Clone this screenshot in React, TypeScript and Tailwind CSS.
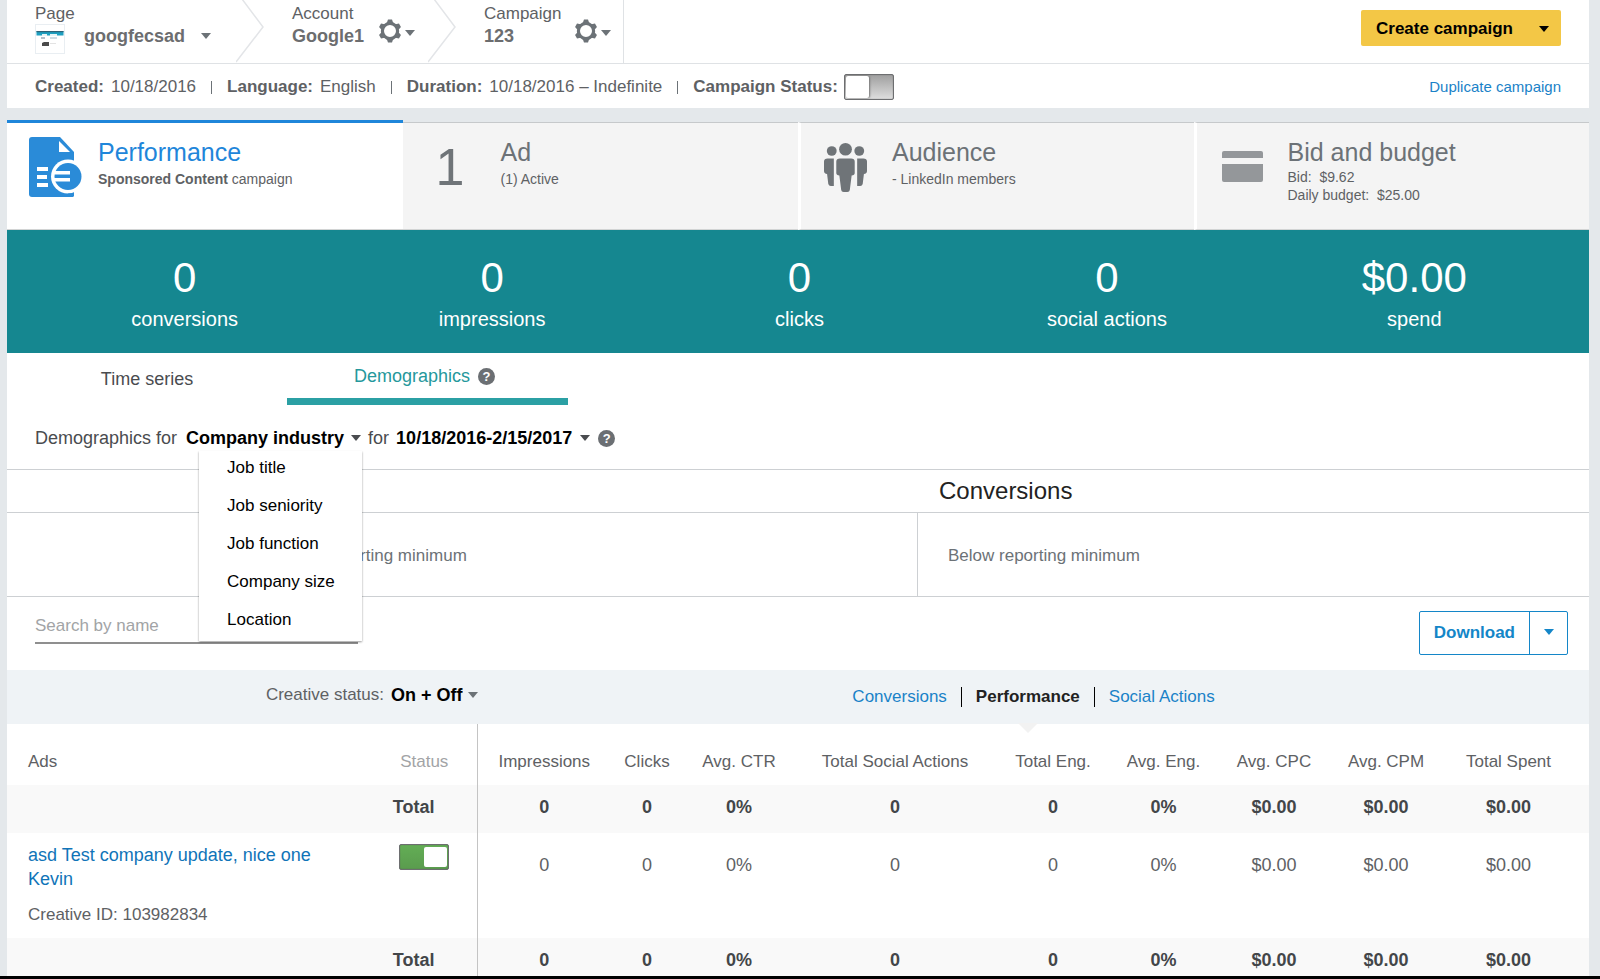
import { useState } from 'react';
import type { ReactNode } from 'react';

interface Metric {
  value: string;
  label: string;
}

interface ReportRow {
  id: string;
  kind: 'total' | 'ad';
  height: string;
  values: string[];
}

const metrics: Metric[] = [
  { value: '0', label: 'conversions' },
  { value: '0', label: 'impressions' },
  { value: '0', label: 'clicks' },
  { value: '0', label: 'social actions' },
  { value: '$0.00', label: 'spend' },
];

const demographics = ['Job title', 'Job seniority', 'Job function', 'Company size', 'Location'];

const columns = [
  { name: 'Impressions', width: 'w-[134px]' },
  { name: 'Clicks', width: 'w-[72px]' },
  { name: 'Avg. CTR', width: 'w-[112px]' },
  { name: 'Total Social Actions', width: 'w-[200px]' },
  { name: 'Total Eng.', width: 'w-[116px]' },
  { name: 'Avg. Eng.', width: 'w-[105px]' },
  { name: 'Avg. CPC', width: 'w-[116px]' },
  { name: 'Avg. CPM', width: 'w-[108px]' },
  { name: 'Total Spent', width: 'w-[137px]' },
];

const values = ['0', '0', '0%', '0', '0', '0%', '$0.00', '$0.00', '$0.00'];

const rows: ReportRow[] = [
  { id: 'total-top', kind: 'total', height: 'h-[48px]', values },
  { id: '103982834', kind: 'ad', height: 'h-[105px]', values },
  { id: 'total-bottom', kind: 'total', height: 'h-[38px]', values },
];

const Caret = ({ className = '' }: { className?: string }) => (
  <svg viewBox="0 0 10 6" className={`h-[6px] w-[10px] shrink-0 fill-current ${className}`} aria-hidden="true">
    <path d="M0 0h10L5 6z" />
  </svg>
);

const Gear = () => (
  <svg viewBox="0 0 24 24" className="size-[24px]" aria-hidden="true">
    <circle cx="12" cy="12" r="7.600" fill="none" stroke="#6c7277" strokeWidth="3.200" />
    {[0, 60, 120, 180, 240, 300].map((angle) => (
      <path key={angle} d="M10 .5h4l1.600 4.500H8.400z" fill="#6c7277" transform={`rotate(${angle} 12 12)`} />
    ))}
  </svg>
);

const Chevron = () => (
  <svg viewBox="0 0 28 63" className="h-[63px] w-[28px]" fill="none" stroke="#e3e5e8" strokeWidth="1.500" aria-hidden="true">
    <path d="M6 -1L27 27L0 62" />
  </svg>
);

const PageThumb = () => (
  <svg viewBox="0 0 30 30" className="size-[30px]" aria-hidden="true">
    <rect x=".5" y=".5" width="29" height="29" fill="#fff" stroke="#e9eef2" />
    <rect x="1.500" y="7" width="27" height="4.500" fill="#1d9fc0" />
    <rect x="1.500" y="7" width="27" height="1.200" fill="#2f6277" />
    <rect x="7" y="10" width="5" height="2" fill="#e8f4f6" />
    <rect x="15" y="10" width="7" height="2" fill="#e8f4f6" />
    <rect x="6" y="13" width="4" height="2" fill="#b4c0cb" />
    <rect x="15" y="13" width="7" height="2" fill="#cfdce4" />
    <path d="M7 19l2-1h5v4H7z" fill="#4b4b4b" />
    <rect x="15" y="19" width="6" height="1" fill="#e3e3e3" />
  </svg>
);

const ReportIcon = () => (
  <svg viewBox="0 0 53 60" className="h-[60px] w-[53px]" aria-hidden="true">
    <path d="M3 0h28l14 15v43a2 2 0 0 1-2 2H3a3 3 0 0 1-3-3V3a3 3 0 0 1 3-3z" fill="#2a8bd8" />
    <path d="M30 4v11h11z" fill="#fff" />
    <path d="M8 30h11v4H8zM8 38h10v4H8zM8 46h11v4H8z" fill="#fff" />
    <circle cx="39" cy="39.500" r="17" fill="#fff" />
    <path d="M39 56.500q3 0 6-1v3a2 2 0 0 1-2 1.500h-6z" fill="#2a8bd8" />
    <circle cx="39" cy="39.500" r="13.500" fill="#2a8bd8" />
    <path d="M24 34h17v3.500H24zM24 41h17v3.500H24z" fill="#fff" />
  </svg>
);

const PeopleIcon = () => (
  <svg viewBox="0 0 35 49" preserveAspectRatio="none" className="h-[49px] w-[43px] fill-[#6f7478]" aria-hidden="true">
    <ellipse cx="17.500" cy="6.300" rx="5.200" ry="6.300" />
    <ellipse cx="6.300" cy="8" rx="4" ry="4.800" />
    <ellipse cx="28.700" cy="8" rx="4" ry="4.800" />
    <path d="M13 15.500h9q3 0 3 3V30q0 2-2.500 2.500L21 47q-.2 2-2 2h-3q-1.800 0-2-2l-1.500-14.500Q10 32 10 30V18.500q0-3 3-3z" />
    <path d="M3 15.500h5V43H5.500q-1.500 0-2-2L2.500 31Q0 30.500 0 28v-9.500q0-3 3-3z" />
    <path d="M32 15.500h-5V43h2.500q1.500 0 2-2l1-10q2.500-.5 2.500-3v-9.500q0-3-3-3z" />
  </svg>
);

const CardIcon = () => (
  <svg viewBox="0 0 41 31" className="h-[31px] w-[41px] fill-[#94979a]" aria-hidden="true">
    <path d="M2 0h37q2 0 2 2v5H0V2q0-2 2-2zM0 13h41v16q0 2-2 2H2q-2 0-2-2z" />
  </svg>
);

const Help = () => (
  <button
    type="button"
    aria-label="Help"
    className="flex size-[17px] items-center justify-center rounded-full bg-[#6b6f73] text-[13px] leading-none font-bold text-white"
  >
    ?
  </button>
);

const Toggle = ({ label, defaultChecked = false }: { label: string; defaultChecked?: boolean }) => (
  <input
    type="checkbox"
    aria-label={label}
    defaultChecked={defaultChecked}
    className="flex h-[26px] w-[50px] appearance-none items-center justify-start rounded-xs border border-[#6d6e70] bg-linear-to-b from-[#a0a0a0] to-[#dedede] px-px shadow-[inset_0_0_1px_#555] before:block before:h-[22px] before:w-[23px] before:rounded-xs before:bg-white before:shadow-[1px_0_2px_#777] checked:justify-end checked:from-[#63ad55] checked:to-[#5a9c4e] checked:before:h-[20px] checked:before:shadow-none"
  />
);

const Separator = () => <span className="h-[13px] w-px bg-[#6c7277]" />;

const Summary = ({
  icon,
  title,
  iconClass,
  className,
  titleClass = 'text-[#6c7277]',
  children,
}: {
  icon: ReactNode;
  title: string;
  iconClass: string;
  className: string;
  titleClass?: string;
  children: ReactNode;
}) => (
  <button type="button" className={`flex border-b border-b-[#d2d4d4] text-left ${className}`}>
    <span className={`shrink-0 ${iconClass}`}>{icon}</span>
    <span className="flex flex-col pt-[13px] text-[14px] leading-[18px] text-[#5e6164]">
      <span className={`text-[25px] leading-[32px] ${titleClass}`}>{title}</span>
      {children}
    </span>
  </button>
);

export default function App() {
  const [menuOpen, setMenuOpen] = useState(true);
  const [search, setSearch] = useState('');

  return (
    <div className="min-h-screen border-b-3 border-black bg-[#e4e8eb] pr-[11px] pl-[7px] font-['Liberation_Sans',Arial,sans-serif] text-[17px] text-[#5e6164]">
      <header className="bg-white">
        <div className="flex h-[64px] items-start border-b border-[#dfe2e5]">
          <div className="flex w-[229px] flex-col pt-[4px] pl-[28px]">
            <label htmlFor="page" className="leading-[20px]">Page</label>
            <div className="flex items-center">
              <PageThumb />
              <div className="flex items-center pb-[7px] pl-[19px]">
                <select id="page" className="appearance-none text-[18px] leading-[22px] font-bold text-[#6c6d6f]">
                  <option>googfecsad</option>
                </select>
                <Caret className="ml-[15px] text-[#6c7277]" />
              </div>
            </div>
          </div>
          <Chevron />
          <div className="flex w-[164px] pt-[4px] pl-[28px]">
            <div className="w-[86px]">
              <div className="leading-[20px]">Account</div>
              <div className="pt-[1px] text-[18px] leading-[22px] font-bold text-[#6c6d6f]">Google1</div>
            </div>
            <button type="button" aria-label="Account settings" className="flex h-[42px] items-center gap-[3px] pt-[11px] text-[#6c7277]">
              <Gear />
              <Caret className="mt-[4px]" />
            </button>
          </div>
          <Chevron />
          <div className="flex h-[63px] w-[168px] border-r border-[#dfe2e5] pt-[4px] pl-[28px]">
            <div className="w-[90px]">
              <div className="leading-[20px]">Campaign</div>
              <div className="pt-[1px] text-[18px] leading-[22px] font-bold text-[#6c6d6f]">123</div>
            </div>
            <button type="button" aria-label="Campaign settings" className="flex h-[42px] items-center gap-[3px] pt-[11px] text-[#6c7277]">
              <Gear />
              <Caret className="mt-[4px]" />
            </button>
          </div>
          <button
            type="button"
            className="mt-[10px] mr-[28px] ml-auto flex h-[36px] items-center rounded-xs bg-[#f3c746] px-[12px] pt-[2px] font-bold text-black"
          >
            <span className="pl-[3px]">Create campaign</span>
            <Caret className="ml-[26px]" />
          </button>
        </div>

        <div className="flex h-[44px] items-center gap-[15px] px-[28px] pt-[2px]">
          <span className="flex gap-[7px]"><b>Created:</b> 10/18/2016</span>
          <Separator />
          <span className="flex gap-[7px]"><b>Language:</b> English</span>
          <Separator />
          <span className="flex gap-[7px]"><b>Duration:</b> 10/18/2016 – Indefinite</span>
          <Separator />
          <span className="flex items-center gap-[6px]">
            <b>Campaign Status:</b>
            <Toggle label="Campaign Status" />
          </span>
          <a href="#duplicate" className="ml-auto text-[15px] text-[#1a82c8]">Duplicate campaign</a>
        </div>
      </header>

      <nav className="mt-[12px] grid grid-cols-4">
        <Summary
          title="Performance"
          titleClass="text-[#1f86da]"
          className="h-[110px] border-t-3 border-t-[#1f86da] bg-white"
          icon={<ReportIcon />}
          iconClass="w-[91px] pt-[14px] pl-[22px]"
        >
          <span className="pt-[2px]"><b>Sponsored Content</b> campaign</span>
        </Summary>
        <Summary
          title="Ad"
          className="mt-[2px] h-[108px] border-t border-t-[#c6c9cb] bg-[#f4f4f4]"
          icon={<span className="text-[52px] leading-[52px] text-[#6f7478]">1</span>}
          iconClass="w-[98px] pt-[18px] pl-[33px]"
        >
          <span className="pt-[2px]">(1) Active</span>
        </Summary>
        <Summary
          title="Audience"
          className="mt-[2px] h-[108px] border-t border-l-3 border-t-[#c6c9cb] border-l-white bg-[#f4f4f4]"
          icon={<PeopleIcon />}
          iconClass="w-[91px] pt-[20px] pl-[23px]"
        >
          <span className="pt-[2px]">- LinkedIn members</span>
        </Summary>
        <Summary
          title="Bid and budget"
          className="mt-[2px] h-[108px] border-t border-l-3 border-t-[#c6c9cb] border-l-white bg-[#f4f4f4]"
          icon={<CardIcon />}
          iconClass="w-[91px] pt-[28px] pl-[25px]"
        >
          <span>Bid:&nbsp; $9.62</span>
          <span>Daily budget:&nbsp; $25.00</span>
        </Summary>
      </nav>

      <section className="flex h-[123px] bg-[#158790] pt-[24px] pr-[21px] pl-[24px] text-center text-white">
        {metrics.map((metric) => (
          <div key={metric.label} className="flex-1">
            <div className="text-[42px] leading-[48px]">{metric.value}</div>
            <div className="pt-[3px] text-[20px] leading-[28px]">{metric.label}</div>
          </div>
        ))}
      </section>

      <main className="bg-white">
        <div className="flex h-[52px] text-[18px]">
          <button type="button" className="w-[280px] text-[#4a4c4f]">Time series</button>
          <div className="flex w-[281px] items-center justify-center gap-[8px] border-b-7 border-[#2ba0a4] pt-[2px] pr-[6px] text-[#25989c]">
            <button type="button">Demographics</button>
            <Help />
          </div>
        </div>

        <div className="flex h-[64px] items-center px-[28px] pt-[2px] text-[18px] text-[#4a4c4f]">
          <span>Demographics for</span>
          <div className="relative ml-[9px]">
            <button
              type="button"
              aria-expanded={menuOpen}
              onClick={() => setMenuOpen(!menuOpen)}
              className="flex items-center gap-[7px] font-bold text-black"
            >
              Company industry
              <Caret className="text-[#4a4c4f]" />
            </button>
            {menuOpen && (
              <ul className="absolute top-full left-[13px] z-10 -mt-px w-[163px] bg-white text-[17px] text-black shadow-[0_1px_2px_rgba(0,0,0,0.4)] [clip-path:inset(0_-4px_-4px_-4px)]">
                {demographics.map((item) => (
                  <li key={item}>
                    <button type="button" className="h-[38px] w-full pb-[3px] pl-[28px] text-left">{item}</button>
                  </li>
                ))}
              </ul>
            )}
          </div>
          <label htmlFor="range" className="mx-[7px]">for</label>
          <select id="range" className="appearance-none font-bold text-black">
            <option>10/18/2016-2/15/2017</option>
          </select>
          <Caret className="mr-[8px] ml-[7px]" />
          <Help />
        </div>

        <div className="border-y border-[#cdd0d3]">
          <div className="grid h-[43px] grid-cols-[238px_1fr_1fr] items-center border-b border-[#cdd0d3] text-[24px] text-[#222]">
            <h2 className="col-start-3 pl-[22px]">Conversions</h2>
          </div>
          <div className="grid h-[83px] grid-cols-[238px_1fr_1fr] text-[#6c7277]">
            <div className="col-start-2 flex items-center pt-[2px] pl-[30px]">Below reporting minimum</div>
            <div className="flex items-center border-l border-[#cdd0d3] pt-[2px] pl-[30px]">Below reporting minimum</div>
          </div>
        </div>

        <div className="flex h-[73px] items-start justify-between pt-[14px] pr-[21px] pl-[28px]">
          <input
            type="text"
            aria-label="Search by name"
            placeholder="Search by name"
            value={search}
            onChange={(e) => setSearch(e.target.value)}
            className="h-[33px] w-[323px] border-b-2 border-[#8f8f8f] pb-[2px] outline-none placeholder:text-[#a2a4a6]"
          />
          <div className="flex h-[44px] rounded-xs border border-[#1486c8] font-bold text-[#1486c8]">
            <button type="button" className="px-[14px]">Download</button>
            <button type="button" aria-label="Download options" className="flex w-[38px] items-center justify-center border-l border-[#1486c8] pb-[3px]">
              <Caret />
            </button>
          </div>
        </div>

        <div className="flex h-[54px] items-center bg-[#eff3f6]">
          <div className="flex w-[471px] items-center justify-end pb-[4px]">
            <label htmlFor="creative-status">Creative status:</label>
            <select id="creative-status" className="ml-[7px] appearance-none text-[18px] font-bold text-black">
              <option>On + Off</option>
            </select>
            <Caret className="ml-[5px] text-[#6c7277]" />
          </div>
          <div className="flex flex-1 items-center justify-center gap-[14px] text-[#1a82c8]">
            <a href="#conversions">Conversions</a>
            <span className="h-[20px] w-px bg-black" />
            <div className="relative">
              <button type="button" className="font-bold text-[#222]">Performance</button>
              <svg viewBox="0 0 20 10" className="absolute top-[39px] left-1/2 -ml-[10px] h-[10px] w-[20px] fill-[#f2f2f2]" aria-hidden="true">
                <path d="M0 0h20L10 10z" />
              </svg>
            </div>
            <span className="h-[20px] w-px bg-black" />
            <a href="#social">Social Actions</a>
          </div>
        </div>

        <table className="w-full table-fixed text-center">
          <thead>
            <tr className="h-[61px]">
              <th className="pt-[14px] pl-[21px] text-left font-normal">Ads</th>
              <th className="w-[105px] border-r border-[#c4c4c4] pt-[14px] font-normal text-[#a2a4a6]">Status</th>
              {columns.map((column) => (
                <th key={column.name} className={`pt-[14px] font-normal whitespace-nowrap ${column.width}`}>{column.name}</th>
              ))}
              <td className="w-[12px]" />
            </tr>
          </thead>
          <tbody className="text-[18px]">
            {rows.map((row) =>
              row.kind === 'total' ? (
                <tr key={row.id} className={`bg-[#f9f9f9] align-top font-bold text-[#434649] ${row.height}`}>
                  <td colSpan={2} className="border-r border-[#c4c4c4] pt-[9px] pr-[42px] text-right">Total</td>
                  {row.values.map((value, i) => (
                    <td key={columns[i].name} className="pt-[9px]">{value}</td>
                  ))}
                  <td />
                </tr>
              ) : (
                <tr key={row.id} className={`align-top ${row.height}`}>
                  <td className="pt-[10px] pl-[21px] text-left">
                    <a href="#ad" className="block w-[300px] leading-[24px] text-[#1074b8]">
                      asd Test company update, nice one Kevin
                    </a>
                    <div className="pt-[12px] text-[17px] leading-[24px]">Creative ID: {row.id}</div>
                  </td>
                  <td className="border-r border-[#c4c4c4] pt-[11px]">
                    <div className="flex justify-center"><Toggle label="Ad status" defaultChecked /></div>
                  </td>
                  {row.values.map((value, i) => (
                    <td key={columns[i].name} className="pt-[19px]">{value}</td>
                  ))}
                  <td />
                </tr>
              ),
            )}
          </tbody>
        </table>
      </main>
    </div>
  );
}
